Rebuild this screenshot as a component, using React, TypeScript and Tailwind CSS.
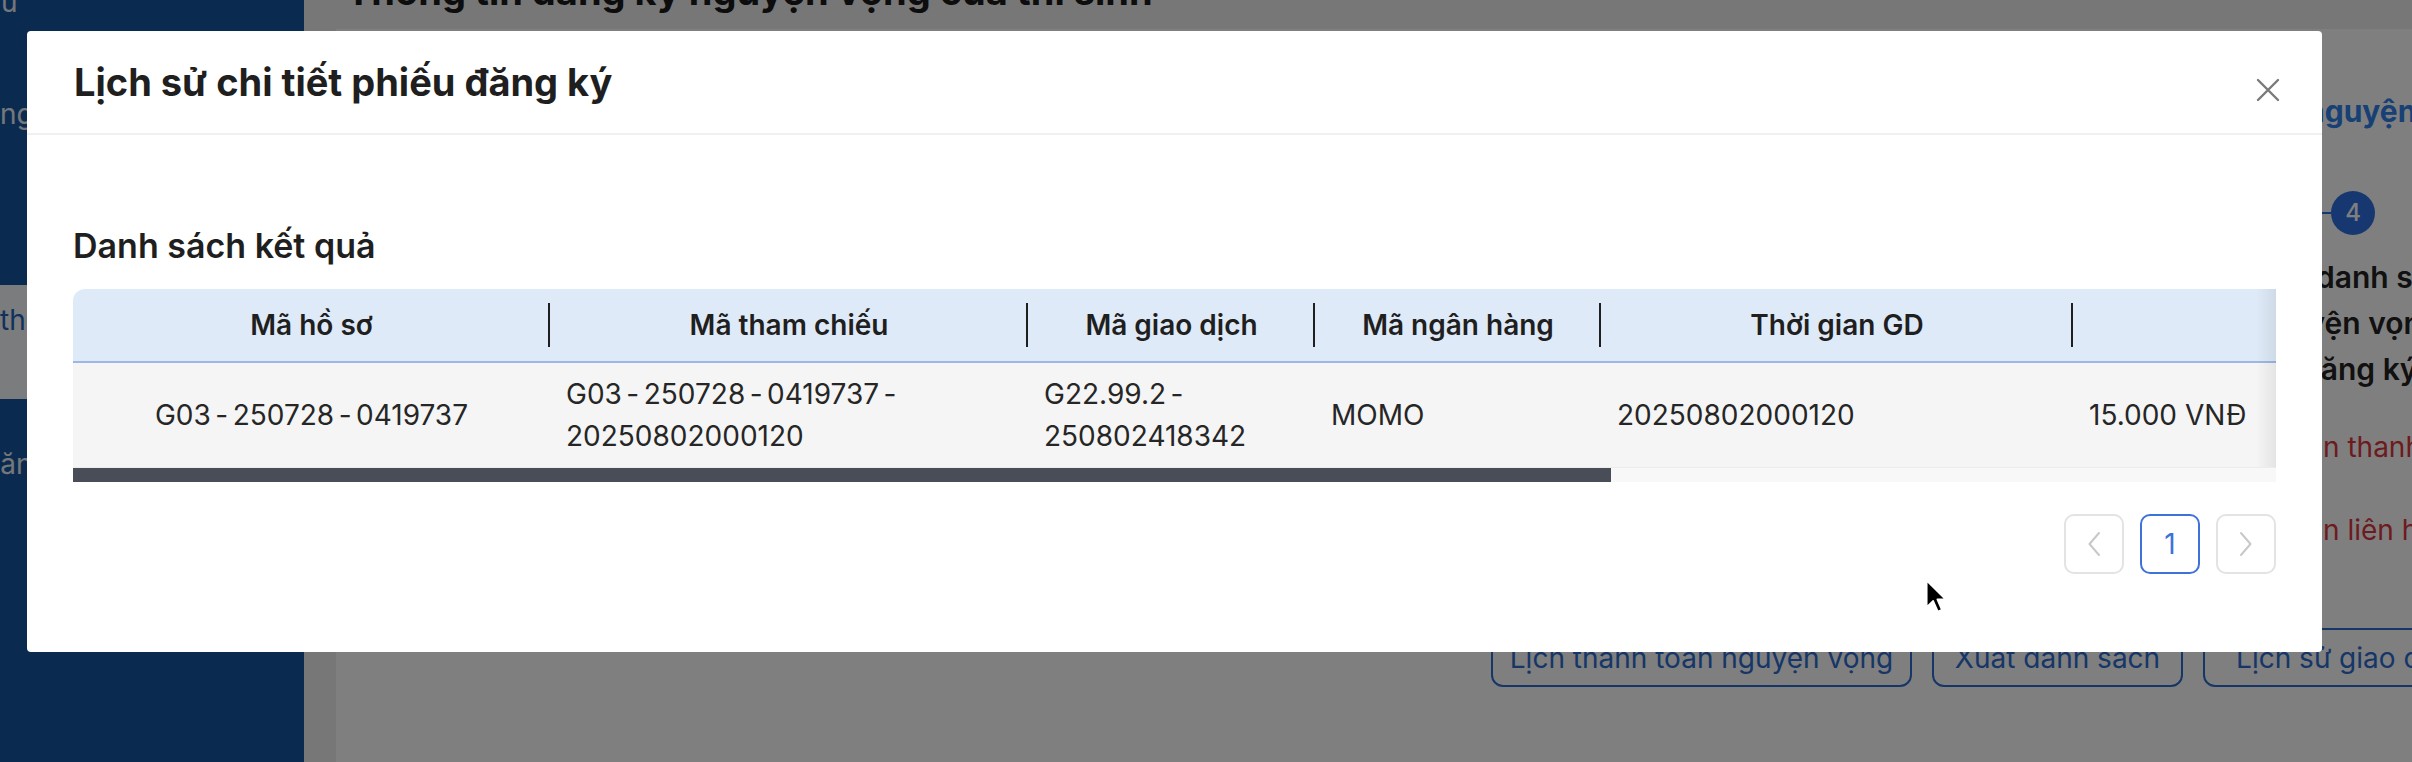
import React from "react";

const columns = [
  { cls: "w-[477px]", title: "Mã hồ sơ" },
  { cls: "w-[478px]", title: "Mã tham chiếu" },
  { cls: "w-[287px]", title: "Mã giao dịch" },
  { cls: "w-[286px]", title: "Mã ngân hàng" },
  { cls: "w-[472px]", title: "Thời gian GD" },
  { cls: "w-[560px]", title: "Số tiền" },
  { cls: "w-[590px]", title: "Trạng thái" },
];

function Hy() {
  return <span className="px-[4.5px]">-</span>;
}

function ChevronLeft() {
  return (
    <svg width="14" height="26" viewBox="0 0 14 26" fill="none">
      <path d="M12 2 L2.5 13 L12 24" stroke="#c8c8c8" strokeWidth="2" strokeLinecap="round" strokeLinejoin="round" />
    </svg>
  );
}

function ChevronRight() {
  return (
    <svg width="14" height="26" viewBox="0 0 14 26" fill="none">
      <path d="M2 2 L11.5 13 L2 24" stroke="#c8c8c8" strokeWidth="2" strokeLinecap="round" strokeLinejoin="round" />
    </svg>
  );
}

function CloseIcon() {
  return (
    <svg width="24" height="24" viewBox="0 0 24 24" fill="none">
      <path d="M2 2 L22 22 M22 2 L2 22" stroke="#7a7a7a" strokeWidth="2.4" strokeLinecap="round" />
    </svg>
  );
}

function Cursor() {
  return (
    <svg width="22" height="34" viewBox="0 0 13 20">
      <path d="M1 1 V16.5 L4.8 12.9 L7.6 19.2 L10 18.2 L7.3 12 H12.2 Z" fill="#000" stroke="#fff" strokeWidth="1" strokeLinejoin="round" />
    </svg>
  );
}

export default function App() {
  return (
    <div className="relative h-[762px] w-[2412px] overflow-hidden bg-[#eeeeee] font-['Inter','Noto_Sans',sans-serif]">
      {/* Page underneath */}
      <div className="flex h-full">
        <aside className="flex w-[304px] shrink-0 flex-col bg-[#16549e] text-[28px] text-[#e8eef7]">
          <div className="-mt-[20px] -ml-[83px] h-[44px] whitespace-nowrap leading-[44px]">Tra cứu</div>
          <div className="mt-[68px] -ml-[36px] h-[44px] whitespace-nowrap leading-[44px]">Đăng ký nguyện vọng</div>
          <div className="mt-[149px] h-[114px] bg-[#f7f9fc] pt-[13px]">
            <div className="h-[44px] whitespace-nowrap leading-[44px] text-[#2563b8]">thông tin thí sinh</div>
          </div>
          <div className="mt-[43px] -ml-[20px] h-[44px] whitespace-nowrap leading-[44px]">Đăng xuất</div>
        </aside>

        <div className="flex min-w-0 flex-1 flex-col pl-[32px]">
          <h1 className="-mt-[28px] h-[38px] whitespace-nowrap pl-[10px] text-[38px] font-bold leading-[38px] text-[#1a1a1a]">
            Thông tin đăng ký nguyện vọng của thí sinh
          </h1>
          <section className="mt-[19px] flex w-[2200px] flex-1 flex-col bg-white">
            <div className="flex">
              <div className="w-[1964px] shrink-0" />
              <div className="flex flex-col whitespace-nowrap">
                <div className="mt-[60px] ml-[6px] text-[30px] font-bold leading-[44px] text-[#2f80ea]">nguyện vọng</div>
                <div className="mt-[58px] flex h-[44px] items-center">
                  <div className="h-[2px] w-[31px] bg-[#2f6fe0]" />
                  <div className="flex h-[44px] w-[44px] items-center justify-center rounded-full bg-[#2f6fe0] text-[24px] font-medium text-white">
                    4
                  </div>
                </div>
                <div className="mt-[19px] flex flex-col text-[30px] font-semibold leading-[46px] text-[#222222]">
                  <span className="ml-[16px]">danh sách</span>
                  <span className="-ml-[48px]">nguyện vọng</span>
                  <span className="ml-[2px]">đăng ký</span>
                </div>
                <div className="mt-[35px] -ml-[9px] text-[28px] leading-[40px] text-[#d9363e]">cần thanh toán</div>
                <div className="mt-[43px] -ml-[9px] text-[28px] leading-[40px] text-[#d9363e]">cần liên hệ</div>
              </div>
            </div>
            <div className="mt-[78px] flex justify-end gap-[20px] pr-[43px]">
              <div className="flex h-[59px] w-[421px] items-center justify-center rounded-[12px] border-2 border-[#2d6cd0] text-[28px] text-[#2d6cd0]">
                Lịch thanh toán nguyện vọng
              </div>
              <div className="flex h-[59px] w-[251px] items-center justify-center rounded-[12px] border-2 border-[#2d6cd0] text-[28px] text-[#2d6cd0]">
                Xuất danh sách
              </div>
              <div className="flex h-[59px] w-[290px] items-center justify-center rounded-[12px] border-2 border-[#2d6cd0] text-[28px] text-[#2d6cd0]">
                Lịch sử giao dịch
              </div>
            </div>
          </section>
        </div>
      </div>

      {/* Mask */}
      <div className="absolute inset-0 bg-black/50" />

      {/* Modal */}
      <div className="absolute left-[27px] top-[31px] w-[2295px] rounded-[4px] bg-white pb-[78px]">
        <div className="flex h-[104px] items-center justify-between border-b-2 border-[#f0f0f0] pl-[47px] pr-[42px]">
          <h2 className="text-[38px] font-bold leading-[44px] text-[#1f1f1f]">Lịch sử chi tiết phiếu đăng ký</h2>
          <button className="mt-[16px] flex h-[24px] w-[24px] items-center justify-center">
            <CloseIcon />
          </button>
        </div>

        <div className="px-[46px] pt-[89px]">
          <h3 className="text-[34px] font-semibold leading-[44px] text-[#1f1f1f]">Danh sách kết quả</h3>

          <div className="relative mt-[21px] overflow-hidden">
            <table className="w-[3150px] table-fixed border-collapse">
              <colgroup>
                {columns.map((c) => (
                  <col key={c.title} className={c.cls} />
                ))}
              </colgroup>
              <thead>
                <tr>
                  {columns.map((c, i) => (
                    <th
                      key={c.title}
                      className={
                        "relative h-[73px] border-b-2 border-[#9bb8e6] bg-[#dfeaf8] px-[16px] text-center align-middle text-[28px] font-semibold text-[#1f1f1f] " +
                        (i === 0 ? "rounded-tl-[12px] " : "") +
                        (i < columns.length - 1
                          ? "after:absolute after:right-0 after:top-1/2 after:h-[44px] after:w-[2px] after:-translate-y-1/2 after:bg-[#1f1f1f] after:content-['']"
                          : "")
                      }
                    >
                      {c.title}
                    </th>
                  ))}
                </tr>
              </thead>
              <tbody>
                <tr className="text-[28px] leading-[42px] text-[#262626]">
                  <td className="whitespace-nowrap border-b border-[#ececec] bg-[#f5f5f5] px-[16px] py-[10px] text-center align-middle">
                    G03<Hy />250728<Hy />0419737
                  </td>
                  <td className="border-b border-[#ececec] bg-[#f5f5f5] px-[16px] py-[10px] align-middle">
                    <span className="whitespace-nowrap">
                      G03<Hy />250728<Hy />0419737<Hy />
                    </span>
                    <wbr />
                    20250802000120
                  </td>
                  <td className="border-b border-[#ececec] bg-[#f5f5f5] px-[16px] py-[10px] align-middle">
                    <span className="whitespace-nowrap">
                      G22.99.2<Hy />
                    </span>
                    <wbr />
                    250802418342
                  </td>
                  <td className="border-b border-[#ececec] bg-[#f5f5f5] px-[16px] py-[10px] align-middle">MOMO</td>
                  <td className="border-b border-[#ececec] bg-[#f5f5f5] px-[16px] py-[10px] align-middle">20250802000120</td>
                  <td className="border-b border-[#ececec] bg-[#f5f5f5] px-[16px] py-[10px] align-middle">15.000 VNĐ</td>
                  <td className="border-b border-[#ececec] bg-[#f5f5f5] px-[16px] py-[10px] text-center align-middle">Thành công</td>
                </tr>
              </tbody>
            </table>
            <div className="h-[14px] bg-[#f8f8f8]">
              <div className="h-full w-[1538px] bg-[#484d57]" />
            </div>
            <div className="pointer-events-none absolute right-0 top-0 h-[178px] w-[20px] bg-linear-to-l from-black/[0.07] to-transparent" />
          </div>

          <div className="mt-[32px] flex justify-end gap-[16px]">
            <button className="flex h-[60px] w-[60px] items-center justify-center rounded-[10px] border-2 border-[#e3e3e3] bg-white">
              <ChevronLeft />
            </button>
            <button className="flex h-[60px] w-[60px] items-center justify-center rounded-[10px] border-2 border-[#3f72d8] bg-white text-[28px] text-[#3f72d8]">
              1
            </button>
            <button className="flex h-[60px] w-[60px] items-center justify-center rounded-[10px] border-2 border-[#e3e3e3] bg-white">
              <ChevronRight />
            </button>
          </div>
        </div>
      </div>

      {/* Mouse pointer */}
      <div className="pointer-events-none absolute left-[1925px] top-[579px]">
        <Cursor />
      </div>
    </div>
  );
}
